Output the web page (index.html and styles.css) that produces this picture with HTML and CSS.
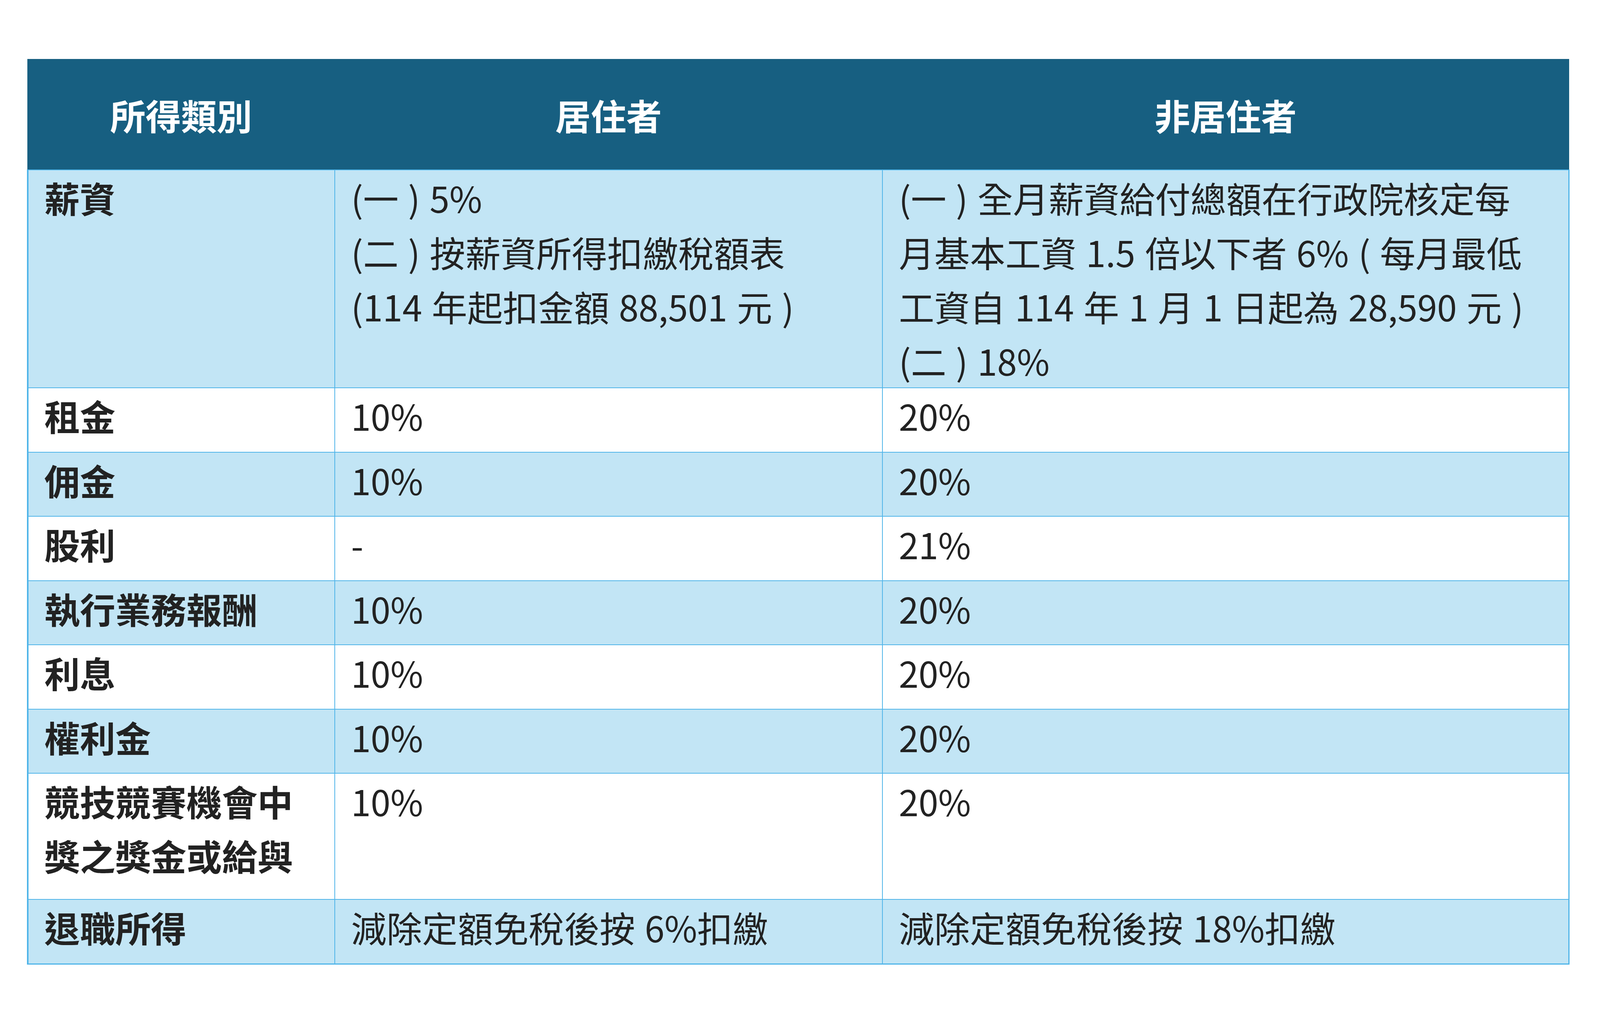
FILE: index.html
```html
<!DOCTYPE html>
<html lang="zh-Hant">
<head>
<meta charset="utf-8">
<title>扣繳率</title>
<link rel="stylesheet" href="styles.css">
</head>
<body>
<div class="wrap">
<table class="tax">
<colgroup>
<col class="c1">
<col class="c2">
<col class="c3">
</colgroup>
<thead>
<tr class="head"><th>所得類別</th><th>居住者</th><th>非居住者</th></tr>
</thead>
<tbody>
<tr class="alt r4"><td>薪資</td><td>(一 ) 5%<br>(二 ) 按薪資所得扣繳稅額表<br>(114 年起扣金額 88,501 元 )</td><td>(一 ) 全月薪資給付總額在行政院核定每<br>月基本工資 1.5 倍以下者 6% ( 每月最低<br>工資自 114 年 1 月 1 日起為 28,590 元 )<br>(二 ) 18%</td></tr>
<tr class="r1"><td>租金</td><td>10%</td><td>20%</td></tr>
<tr class="alt r1"><td>佣金</td><td>10%</td><td>20%</td></tr>
<tr class="r1"><td>股利</td><td>-</td><td>21%</td></tr>
<tr class="alt r1"><td>執行業務報酬</td><td>10%</td><td>20%</td></tr>
<tr class="r1"><td>利息</td><td>10%</td><td>20%</td></tr>
<tr class="alt r1"><td>權利金</td><td>10%</td><td>20%</td></tr>
<tr class="r2"><td>競技競賽機會中<br>獎之獎金或給與</td><td>10%</td><td>20%</td></tr>
<tr class="alt r1"><td>退職所得</td><td>減除定額免稅後按 6%扣繳</td><td>減除定額免稅後按 18%扣繳</td></tr>
</tbody>
</table>
</div>
</body>
</html>
```

FILE: styles.css
```css
/* sizes are expressed in vw so the table keeps the reference proportions
   (1vw = 43.61px in a 4361px wide window) */
html, body {
  margin: 0;
  padding: 0;
  background: #ffffff;
}

.wrap {
  padding: 3.692vw 0 0 1.674vw;
}

.tax {
  width: 96.33vw;
  border-collapse: collapse;
  table-layout: fixed;
  font-family: "Noto Sans CJK TC", "Noto Sans", sans-serif;
  font-size: 2.22vw;
  line-height: 3.394vw;
  color: #222222;
}

.c1 { width: 19.193vw; }
.c2 { width: 34.235vw; }
.c3 { width: 42.903vw; }

.head th {
  height: 6.88vw;
  padding: 0;
  background: #175f81;
  color: #ffffff;
  font-weight: 700;
  text-align: center;
  vertical-align: middle;
  border: 0.046vw solid #175f81;
}

.tax td {
  padding: 0 1.0vw;
  vertical-align: top;
  text-align: left;
  font-weight: 400;
  white-space: nowrap;
  word-spacing: 0.1vw;
  background: #ffffff;
  border: 0.069vw solid #50b5e9;
}

.tax td:first-child {
  font-weight: 700;
  word-spacing: 0;
  border-left: 0.1vw solid #50b5e9;
}

.tax td:last-child {
  border-right: 0.09vw solid #50b5e9;
}

.tax tbody tr:last-child td {
  border-bottom: 0.09vw solid #50b5e9;
}

.tax tr.alt td {
  background: #c2e5f5;
}

.r1 td { height: 3.967vw; }
.r2 td { height: 7.842vw; }
.r4 td { height: 13.46vw; }
```
